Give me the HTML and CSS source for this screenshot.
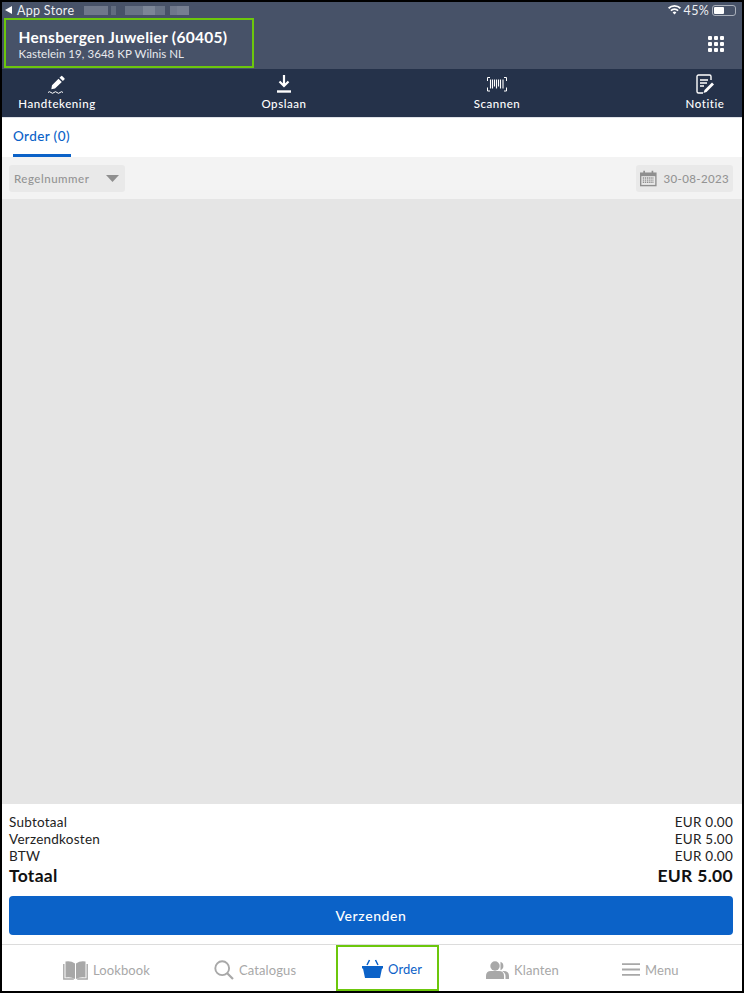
FILE: index.html
```html
<!DOCTYPE html>
<html lang="nl">
<head>
<meta charset="utf-8">
<title>Order</title>
<link rel="stylesheet" href="styles.css">
</head>
<body>
<div class="screen">
  <header class="head">
    <div class="status">
      <div class="status-left">
        <svg class="back-tri" width="7" height="8" viewBox="0 0 7 8"><path d="M7 0v8L0 4z" fill="#fff"/></svg>
        <span>App Store</span>
        <div class="blur">
          <i class="b1"></i><i class="b2"></i><i class="b3"></i><i class="b4"></i><i class="b5"></i><i class="b6"></i><i class="b7"></i>
        </div>
      </div>
      <div class="status-right">
        <svg width="13" height="10" viewBox="0 0 13 10"><path d="M6.500 9.600 4.600 7.500a2.800 2.800 0 0 1 3.800 0zM3.500 6.300 2.300 5a6.200 6.200 0 0 1 8.400 0L9.500 6.300a4.400 4.400 0 0 0-6 0zM1.200 3.900 0 2.600a9.500 9.500 0 0 1 13 0l-1.200 1.300a7.800 7.800 0 0 0-10.600 0z" fill="#fff"/></svg>
        <span>45%</span>
        <div class="battery"><div class="battery-fill"></div></div>
      </div>
    </div>
    <div class="head-row">
      <div class="customer">
        <div class="customer-name">Hensbergen Juwelier (60405)</div>
        <div class="customer-addr">Kastelein 19, 3648 KP Wilnis NL</div>
      </div>
      <div class="grid-icon"><i></i><i></i><i></i><i></i><i></i><i></i><i></i><i></i><i></i></div>
    </div>
  </header>

  <nav class="tools">
    <div class="tool tool-first">
      <svg width="24" height="24" viewBox="0 0 24 24"><path d="M13.500 6.700l3.300 3.300-6.800 6.500-3.700.7.700-3.900zM14.500 5.700l1.500-1.500a1 1 0 0 1 1.400 0l2 2a1 1 0 0 1 0 1.400l-1.500 1.500z" fill="#fff"/><path d="M3 20.500q1.500-1.600 3 0t3 0 3 0 3 0 3 0" fill="none" stroke="#fff" stroke-width="1"/></svg>
      <span>Handtekening</span>
    </div>
    <div class="tool tool-save">
      <svg width="24" height="24" viewBox="0 0 24 24"><path d="M12 3v11M7.500 9.500 12 14l4.500-4.500" fill="none" stroke="#fff" stroke-width="2.200"/><path d="M5 19.500h14" stroke="#fff" stroke-width="2.400"/></svg>
      <span>Opslaan</span>
    </div>
    <div class="tool tool-scan">
      <svg width="24" height="24" viewBox="0 0 24 24"><path d="M5 5.500H2.500V9M19 5.500h2.500V9M5 19H2.500v-3.500M19 19h2.500v-3.500" fill="none" stroke="#fff" stroke-width="1"/><path d="M5.500 7.500v9M7.500 7.500v9M9.500 7.500v7M11.500 7.500v9M13.500 7.500v7M15.500 7.500v9M18 7.500v9" stroke="#fff" stroke-width="1.100"/></svg>
      <span>Scannen</span>
    </div>
    <div class="tool tool-note">
      <svg width="24" height="24" viewBox="0 0 24 24"><path d="M18 8V4.500A1.500 1.500 0 0 0 16.500 3h-11A1.500 1.500 0 0 0 4 4.500v15A1.500 1.500 0 0 0 5.500 21H10" fill="none" stroke="#fff" stroke-width="1.400"/><path d="M7 8h8M7 11h7M7 14h4" stroke="#fff" stroke-width="1.400"/><path d="M19 10.500l2 2-7.500 7.500-3 1 1-3z" fill="#fff"/></svg>
      <span>Notitie</span>
    </div>
  </nav>

  <div class="tabs">
    <div class="tab-active">Order (0)</div>
  </div>

  <div class="filters">
    <div class="chip chip-sort">
      <span>Regelnummer</span>
      <svg width="13" height="7" viewBox="0 0 13 7"><path d="M0 0h13L6.500 7z" fill="#8f8f8f"/></svg>
    </div>
    <div class="chip chip-date">
      <svg width="18" height="18" viewBox="0 0 18 18"><path d="M0 3h18v15H0z" fill="#8f8f8f"/><path d="M1.500 7h15v9.500h-15z" fill="#e8e8e8"/><path d="M4.500 1v3.500M13.500 1v3.500" stroke="#8f8f8f" stroke-width="1.800"/><path d="M3 9h12M3 11.300h12M3 13.600h12" stroke="#8f8f8f" stroke-width="1.400" stroke-dasharray="1.500 .8"/></svg>
      <span>30-08-2023</span>
    </div>
  </div>

  <main class="list"></main>

  <section class="summary">
    <div class="sum-row"><span>Subtotaal</span><span>EUR 0.00</span></div>
    <div class="sum-row"><span>Verzendkosten</span><span>EUR 5.00</span></div>
    <div class="sum-row"><span>BTW</span><span>EUR 0.00</span></div>
    <div class="sum-row sum-total"><span>Totaal</span><span>EUR 5.00</span></div>
    <button class="send">Verzenden</button>
  </section>

  <footer class="tabbar">
    <div class="tb tb-look">
      <svg width="25" height="20" viewBox="0 0 25 20"><path d="M2.500 1.500Q8 .5 12 3.500V19Q8 16.500 2.500 17.500zM22.500 1.500Q17 .5 13 3.500V19Q17 16.500 22.500 17.500z" fill="#a8a8a8"/><path d="M.8 4v15h10M24.200 4v15h-10" fill="none" stroke="#a8a8a8" stroke-width="1.400"/></svg>
      <span>Lookbook</span>
    </div>
    <div class="tb tb-cat">
      <svg width="20" height="20" viewBox="0 0 20 20"><circle cx="8.200" cy="8.200" r="6.900" fill="none" stroke="#a8a8a8" stroke-width="1.900"/><path d="M13 13l6 6" stroke="#a8a8a8" stroke-width="2.200"/></svg>
      <span>Catalogus</span>
    </div>
    <div class="tb tb-order">
      <svg width="21" height="19" viewBox="0 0 21 19"><path d="M0 7h21v2.500h-1L18 19H3L1 9.500H0z" fill="#0b62c8"/><path d="M7.500 1 5 6M13.500 1 16 6" stroke="#0b62c8" stroke-width="1.500"/></svg>
      <span>Order</span>
    </div>
    <div class="tb tb-klant">
      <svg width="23" height="18" viewBox="0 0 23 18"><circle cx="9" cy="5" r="4.700" fill="#a8a8a8"/><path d="M0 18v-3q0-5 5-5h8q5 0 5 5v3z" fill="#a8a8a8"/><path d="M14.500 .8a4.500 4.500 0 0 1 0 8.400zM16 10h1.500q5.500 0 5.500 5v3h-3.500v-3q0-3-3.500-5z" fill="#a8a8a8"/></svg>
      <span>Klanten</span>
    </div>
    <div class="tb tb-menu">
      <svg width="18" height="13" viewBox="0 0 18 13"><path d="M0 1.200h18M0 6.500h18M0 11.800h18" stroke="#a8a8a8" stroke-width="1.800"/></svg>
      <span>Menu</span>
    </div>
  </footer>
</div>
</body>
</html>
```

FILE: styles.css
```css
* { box-sizing: border-box; }
html, body { margin: 0; height: 100%; }
body { background: #000; font-family: "Lato", "Liberation Sans", sans-serif; }
.screen {
  width: 744px; height: 993px;
  border: 2px solid #000;
  display: flex; flex-direction: column;
  background: #fff; overflow: hidden;
}
.head { height: 67px; background: #475268; color: #fff; flex: none; }
.status { height: 16px; display: flex; justify-content: space-between; align-items: center; font-size: 12.500px; letter-spacing: .3px; padding: 0 6px 0 3px; color: #eef0f3; }
.status-left { display: flex; align-items: center; gap: 5px; }
.status-right { display: flex; align-items: center; gap: 3px; }
.blur { display: flex; height: 12px; margin-left: 5px; align-items: center; }
.blur i { display: block; height: 9px; background: #8a93a3; }
.b1 { width: 24px; opacity: .6; margin-right: 3px; }
.b2 { width: 5px; opacity: .4; margin-right: 9px; }
.b3 { width: 18px; opacity: .5; }
.b4 { width: 12px; opacity: .8; }
.b5 { width: 10px; opacity: .5; margin-right: 5px; }
.b6 { width: 7px; opacity: .6; }
.b7 { width: 12px; opacity: .7; }
.battery { width: 24px; height: 11px; border: 1px solid #aab0bb; border-radius: 3px; padding: 1px; }
.battery-fill { width: 10px; height: 100%; background: #fff; border-radius: 1px; }
.head-row { display: flex; justify-content: space-between; align-items: center; height: 51px; padding: 0 18px 0 2px; }
.customer { width: 250px; height: 50px; border: 2px solid #6cc70c; padding: 8px 0 0 12.500px; margin-top: -1px; }
.customer-name { font-size: 15.500px; letter-spacing: .28px; font-weight: 700; line-height: 19px; white-space: nowrap; }
.customer-addr { font-size: 11.500px; letter-spacing: .05px; line-height: 14px; color: #e8eaee; white-space: nowrap; }
.grid-icon { display: grid; grid-template-columns: repeat(3, 4px); grid-auto-rows: 4px; gap: 2px; }
.grid-icon i { background: #fff; border-radius: 1px; }
.tools { height: 48px; background: #25324a; color: #fff; flex: none; display: flex; font-size: 11.500px; font-weight: 500; letter-spacing: .55px; padding-top: 3px; }
.tool { display: flex; flex-direction: column; align-items: center; gap: 1px; white-space: nowrap; line-height: 14px; }
.tool svg { display: block; }
.tool-first { margin-left: 16px; width: 78px; }
.tool-save { margin-left: 164px; width: 48px; }
.tool-scan { margin-left: 165px; width: 48px; }
.tool-note { margin-left: 164px; width: 40px; }
.tabs { height: 40px; flex: none; padding-left: 11px; border-top: 1px solid #dfe2e8; }
.tab-active { width: 58px; height: 39px; padding-top: 10px; font-size: 13.500px; letter-spacing: .4px; font-weight: 500; line-height: 16px; color: #0b62c8; border-bottom: 3px solid #0b62c8; white-space: nowrap; }
.filters { height: 42px; flex: none; background: #f3f3f3; display: flex; justify-content: space-between; align-items: center; padding: 0 9px 0 7px; }
.chip { height: 27px; background: #e9e9e9; border-radius: 3px; display: flex; align-items: center; font-size: 11.500px; font-weight: 500; letter-spacing: .5px; color: #949494; }
.chip-sort { width: 116px; padding: 0 6px 0 5px; justify-content: space-between; }
.chip-date { width: 97px; padding: 0 4px 0 4px; gap: 7px; white-space: nowrap; letter-spacing: .35px; }
.list { flex: 1; background: #e5e5e5; }
.summary { height: 140px; flex: none; padding: 10px 9px 0 7px; color: #222; font-size: 13.500px; letter-spacing: .25px; }
.sum-row { display: flex; justify-content: space-between; line-height: 17px; }
.sum-total { font-size: 17.500px; font-weight: 700; color: #111; line-height: 20px; letter-spacing: .3px; padding-top: 1px; }
.send { display: block; width: 100%; height: 39px; margin-top: 10px; border: 0; border-radius: 4px; background: #0b62c8; color: #fff; font: 500 14px "Lato", "Liberation Sans", sans-serif; letter-spacing: .6px; }
.tabbar { height: 47px; flex: none; border-top: 1px solid #dcdcdc; display: flex; align-items: center; font-size: 13px; letter-spacing: .1px; color: #a8a8a8; }
.tb { display: flex; align-items: center; gap: 5px; height: 100%; padding-top: 3px; white-space: nowrap; }
.tb-look { margin-left: 61px; width: 151px; }
.tb-cat { width: 122px; }
.tb-order { width: 103px; height: 46px; border: 2px solid #6cc70c; padding: 1px 0 0 24px; color: #0b62c8; gap: 5px; align-self: flex-start; }
.tb-klant { margin-left: 47px; width: 136px; }
.tb-menu { gap: 5px; }
```
